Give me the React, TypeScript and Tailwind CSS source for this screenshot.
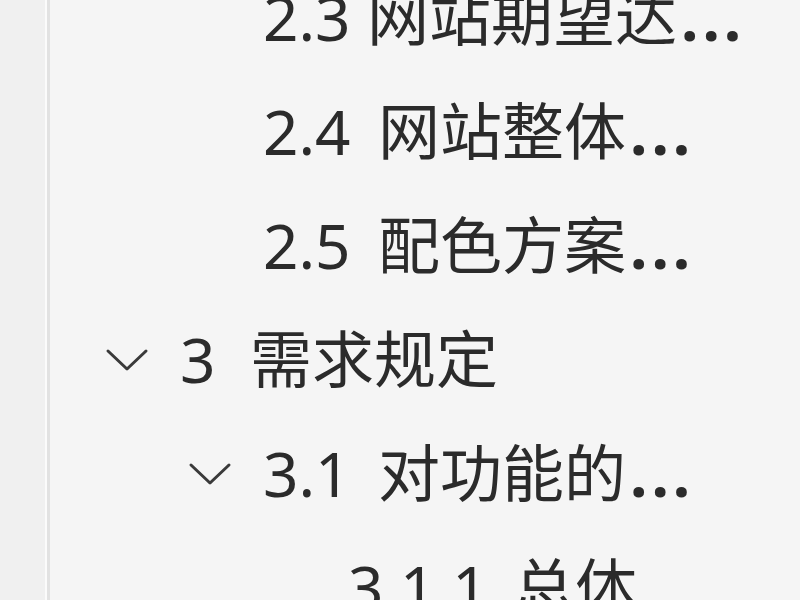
import React from "react";

type Item = {
  num: string;
  title: string;
  level: 1 | 2 | 3;
  expanded?: boolean;
  truncated?: boolean;
  numWidth: string;
};

const items: Item[] = [
  { num: "2.3", title: "网站期望达", level: 2, truncated: true, numWidth: "w-[104px]" },
  { num: "2.4", title: "网站整体", level: 2, truncated: true, numWidth: "w-[115px]" },
  { num: "2.5", title: "配色方案", level: 2, truncated: true, numWidth: "w-[115px]" },
  { num: "3", title: "需求规定", level: 1, expanded: true, numWidth: "w-[70px]" },
  { num: "3.1", title: "对功能的", level: 2, expanded: true, truncated: true, numWidth: "w-[115px]" },
  { num: "3.1.1", title: "总体", level: 3, truncated: true, numWidth: "w-[165px]" },
];

const indent: Record<number, string> = {
  1: "pl-[55px]",
  2: "pl-[138px]",
  3: "pl-[223px]",
};

function Chevron({ show }: { show: boolean }) {
  return (
    <div className="w-[44px] h-[28px] flex items-center justify-center shrink-0">
      {show && (
        <svg width="44" height="28" viewBox="0 0 44 28" fill="none">
          <path
            d="M3 6 L22 24 L41 6"
            stroke="#3a3a3a"
            strokeWidth="3"
            strokeLinecap="round"
            strokeLinejoin="round"
          />
        </svg>
      )}
    </div>
  );
}

export default function App() {
  return (
    <div
      className="w-[800px] h-[600px] overflow-hidden flex bg-[#f5f5f5]"
      style={{ fontFamily: '"Segoe UI", "Noto Sans", "Noto Sans CJK SC", sans-serif' }}
    >
      {/* left rail */}
      <div className="w-[45px] h-full bg-[#f0f0f0] shrink-0" />
      <div className="w-[2px] h-full bg-[#fbfbfb] shrink-0" />
      <div className="w-[3px] h-full bg-[#e2e2e2] shrink-0" />

      {/* outline tree */}
      <div className="flex-1 flex flex-col mt-[-40px]">
        {items.map((it) => (
          <div
            key={it.num}
            className={`h-[114px] shrink-0 flex items-center ${indent[it.level]} text-[62px] leading-none text-[#2b2b2b] whitespace-nowrap`}
          >
            <Chevron show={!!it.expanded} />
            <div className="ml-[31px] flex items-center">
              <span className={`${it.numWidth} shrink-0`}>{it.num}</span>
              <span>{it.title}</span>
              {it.truncated && (
                <span className="ml-[4px] tracking-[4px] font-bold">...</span>
              )}
            </div>
          </div>
        ))}
      </div>
    </div>
  );
}
